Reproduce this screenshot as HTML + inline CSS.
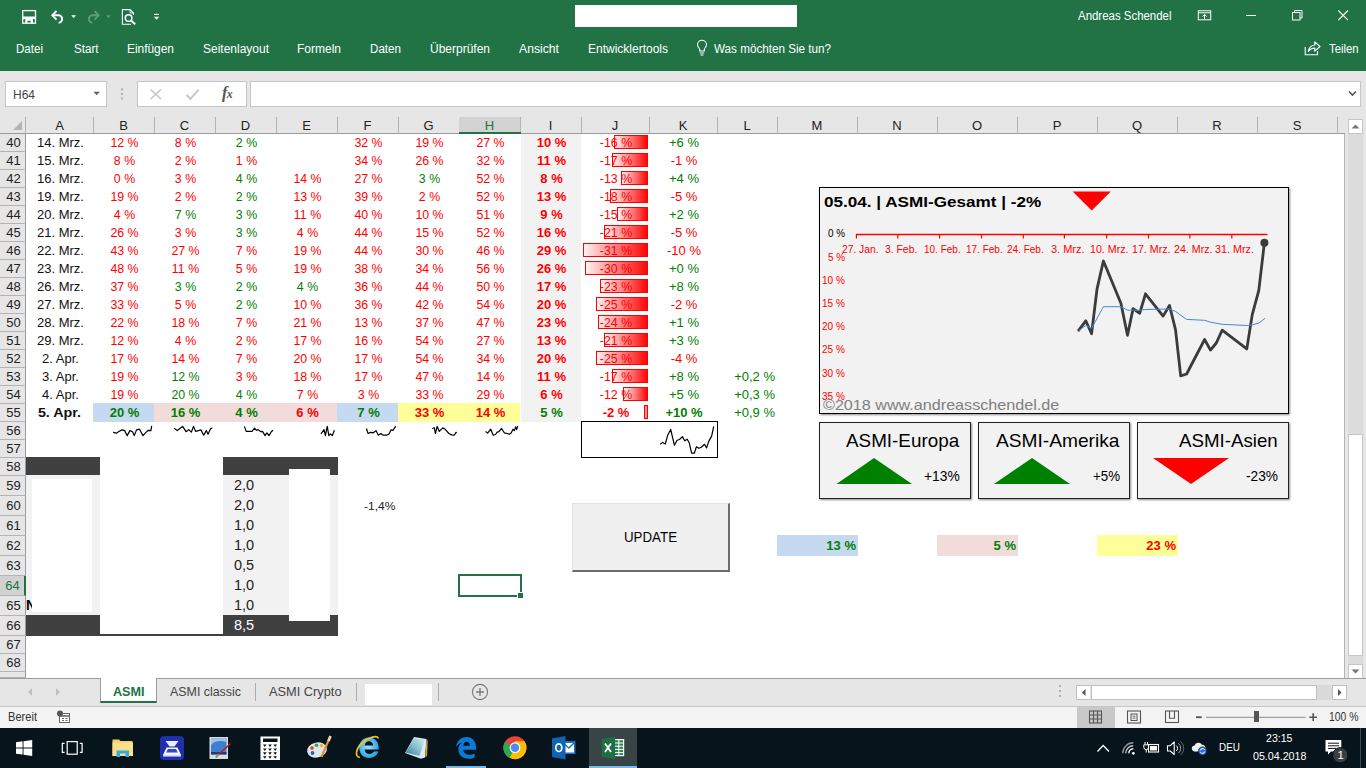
<!DOCTYPE html><html lang="de"><head><meta charset="utf-8"><title>Excel</title><style>
html,body{margin:0;padding:0;}
body{width:1366px;height:768px;overflow:hidden;position:relative;background:#fff;font-family:"Liberation Sans",sans-serif;font-size:12px;color:#000;}
div,span{position:absolute;box-sizing:border-box;white-space:nowrap;}
svg{position:absolute;overflow:visible;}
.t{line-height:1;transform-origin:0 50%;}
.w{color:#fff;}
.ch{top:117px;height:16px;font-size:13px;line-height:17px;text-align:center;color:#222;border-right:1px solid #b4b4b4;}
.rh{left:0;width:26px;text-indent:1px;font-size:13px;text-align:center;color:#222;border-bottom:1px solid #b4b4b4;}
.c{height:18px;line-height:17px;font-size:13px;text-align:center;color:#111;}
.r{color:#ff0000;}
.g{color:#008000;}
.b{font-weight:bold;}
.n{left:223px;width:42px;text-align:center;font-size:14.5px;color:#222;line-height:20px;height:20px;}
</style></head><body>
<div style="left:0;top:0;width:1366px;height:71px;background:#217346"></div>
<div style="left:575px;top:5px;width:222px;height:22px;background:#fff"></div>
<div class="t" style="left:1078.0px;top:10px;font-size:12.5px;color:#fff;transform:scaleX(0.915);">Andreas Schendel</div>
<div class="t" style="left:16.0px;top:43px;font-size:12.5px;color:#fff;transform:scaleX(0.925);">Datei</div>
<div class="t" style="left:73.5px;top:43px;font-size:12.5px;color:#fff;transform:scaleX(0.928);">Start</div>
<div class="t" style="left:127.0px;top:43px;font-size:12.5px;color:#fff;transform:scaleX(0.952);">Einfügen</div>
<div class="t" style="left:202.5px;top:43px;font-size:12.5px;color:#fff;transform:scaleX(0.959);">Seitenlayout</div>
<div class="t" style="left:297.0px;top:43px;font-size:12.5px;color:#fff;transform:scaleX(0.960);">Formeln</div>
<div class="t" style="left:370.0px;top:43px;font-size:12.5px;color:#fff;transform:scaleX(0.929);">Daten</div>
<div class="t" style="left:430.0px;top:43px;font-size:12.5px;color:#fff;transform:scaleX(0.959);">Überprüfen</div>
<div class="t" style="left:519.0px;top:43px;font-size:12.5px;color:#fff;transform:scaleX(0.976);">Ansicht</div>
<div class="t" style="left:588.0px;top:43px;font-size:12.5px;color:#fff;transform:scaleX(0.960);">Entwicklertools</div>
<div class="t" style="left:714.0px;top:43px;font-size:12.5px;color:#fff;transform:scaleX(0.934);">Was möchten Sie tun?</div>
<div class="t" style="left:1329.0px;top:43px;font-size:12.5px;color:#fff;transform:scaleX(0.906);">Teilen</div>
<svg style="left:0;top:0" width="1366" height="71"><rect x="22.7" y="10.6" width="12.8" height="12.6" fill="none" stroke="#fff" stroke-width="1.3"/><rect x="25" y="10.6" width="8.6" height="4.8" fill="none" stroke="#fff" stroke-width="0"/><rect x="23" y="16.5" width="12.4" height="2.6" fill="#fff"/><path d="M25.2 19V23.2H27.5V20.8H30.6V23.2H33V19Z" fill="#fff"/><path d="M56.5 11L52.3 15.3L56.5 19.6" fill="none" stroke="#fff" stroke-width="1.9"/><path d="M52.8 15.3H59.6A3.9 3.9 0 0 1 59.6 22.6H58.6" fill="none" stroke="#fff" stroke-width="1.9"/><path d="M71.2 15.2H76L73.6 18Z" fill="#fff"/><path d="M94.5 11L98.7 15.3L94.5 19.6" fill="none" stroke="#5c9b79" stroke-width="1.9"/><path d="M98.2 15.3H91.4A3.9 3.9 0 0 0 91.4 22.6H92.4" fill="none" stroke="#5c9b79" stroke-width="1.9"/><path d="M106 15.2H110.8L108.4 18Z" fill="#5c9b79"/><path d="M131 24.3H122.4V9.6H130L133.4 13V15" fill="none" stroke="#fff" stroke-width="1.1"/><path d="M130 9.6V13H133.4" fill="none" stroke="#fff" stroke-width="0.8"/><circle cx="128.6" cy="18" r="3.3" fill="none" stroke="#fff" stroke-width="1.5"/><path d="M131 20.6L135.2 24.3" stroke="#fff" stroke-width="2" fill="none"/><path d="M154 14.4H159" stroke="#fff" stroke-width="1.1"/><path d="M153.8 16.8H159.2L156.5 19.8Z" fill="#fff"/><rect x="1198.3" y="10.8" width="12.4" height="9" fill="none" stroke="#fff" stroke-width="1"/><path d="M1198 12.8H1211" stroke="#fff" stroke-width="1"/><path d="M1204.5 19V14.6M1202.3 16.6L1204.5 14.4L1206.7 16.6" fill="none" stroke="#fff" stroke-width="1"/><path d="M1246 15.5H1256" stroke="#fff" stroke-width="1"/><rect x="1292.5" y="12.5" width="7.5" height="7.5" fill="none" stroke="#fff" stroke-width="1"/><path d="M1294.5 12.5V10.5H1302V18H1300" fill="none" stroke="#fff" stroke-width="1"/><path d="M1338.3 10.5L1348 20.2M1348 10.5L1338.3 20.2" stroke="#fff" stroke-width="1.1"/><path d="M699.7 51V49.6C699.7 48 697.5 47.3 697.5 44.8A4.5 4.5 0 0 1 706.5 44.8C706.5 47.3 704.3 48 704.3 49.6V51Z" fill="none" stroke="#fff" stroke-width="1.1"/><path d="M699.8 53H704.2M700.5 55H703.5" stroke="#fff" stroke-width="1.1"/><path d="M1305.2 47V54.7H1317.5V51" fill="none" stroke="#fff" stroke-width="1.1"/><path d="M1308.3 51.5C1309 47.5 1311.7 45.3 1314.8 45V41.8L1320 46.5L1314.8 51.2V48.1C1312.2 48.1 1310 49 1308.3 51.5Z" fill="none" stroke="#fff" stroke-width="1.1" stroke-linejoin="round"/></svg>
<div style="left:0;top:71px;width:1366px;height:46px;background:#e6e6e6"></div>
<div style="left:5px;top:81px;width:102px;height:26px;background:#fff;border:1px solid #c6c6c6"></div>
<div class="t" style="left:12.7px;top:89px;font-size:12.5px;color:#444;transform:scaleX(0.959);">H64</div>
<div style="left:137px;top:81px;width:110px;height:26px;background:#fff;border:1px solid #c6c6c6"></div>
<div style="left:250px;top:81px;width:1111px;height:26px;background:#fff;border:1px solid #c6c6c6"></div>
<svg style="left:0;top:71px" width="1366" height="46" viewBox="0 71 1366 46"><path d="M93.3 91.8H100L96.65 95.2Z" fill="#666"/><rect x="121" y="88.4" width="2" height="2" fill="#b0b0b0"/><rect x="121" y="93.0" width="2" height="2" fill="#b0b0b0"/><rect x="121" y="97.5" width="2" height="2" fill="#b0b0b0"/><path d="M150.6 89.4L161 99M161 89.4L150.6 99" stroke="#c3c3c3" stroke-width="1.4"/><path d="M186.5 95L190.5 98.8L198.6 89.6" fill="none" stroke="#c6c6c6" stroke-width="1.9"/><path d="M1349 91.5L1352.5 95L1356 91.5" fill="none" stroke="#555" stroke-width="1.6"/></svg><div class="t" style="left:222px;top:85px;font-family:'Liberation Serif',serif;font-style:italic;font-size:16px;color:#555;font-weight:bold;letter-spacing:-0.5px">f<span style="position:static;font-size:12px">x</span></div>
<div style="left:0;top:117px;width:1366px;height:17px;background:#e6e6e6"></div>
<div class="ch" style="left:26px;width:68px;">A</div>
<div class="ch" style="left:93px;width:62px;">B</div>
<div class="ch" style="left:154px;width:62px;">C</div>
<div class="ch" style="left:215px;width:62px;">D</div>
<div class="ch" style="left:276px;width:62px;">E</div>
<div class="ch" style="left:337px;width:62px;">F</div>
<div class="ch" style="left:398px;width:62px;">G</div>
<div class="ch" style="left:459px;width:62px;background:#d2d2d2;color:#217346;">H</div>
<div class="ch" style="left:520px;width:62px;">I</div>
<div class="ch" style="left:581px;width:69px;">J</div>
<div class="ch" style="left:649px;width:69px;">K</div>
<div class="ch" style="left:717px;width:61px;">L</div>
<div class="ch" style="left:777px;width:81px;">M</div>
<div class="ch" style="left:857px;width:81px;">N</div>
<div class="ch" style="left:937px;width:81px;">O</div>
<div class="ch" style="left:1017px;width:81px;">P</div>
<div class="ch" style="left:1097px;width:81px;">Q</div>
<div class="ch" style="left:1177px;width:81px;">R</div>
<div class="ch" style="left:1257px;width:81px;">S</div>
<div style="left:25px;top:117px;width:1px;height:16px;background:#b4b4b4"></div>
<div style="left:0;top:133px;width:1345px;height:1px;background:#9b9b9b"></div>
<div style="left:459px;top:132px;width:62px;height:2px;background:#217346"></div>
<svg style="left:13px;top:121px" width="9" height="9"><path d="M9 0V9H0Z" fill="#b4b4b4"/></svg>
<div style="left:0;top:134px;width:26px;height:544px;background:#e6e6e6;border-right:1px solid #9b9b9b"></div>
<div class="rh" style="top:134px;height:18px;line-height:17px;">40</div>
<div class="rh" style="top:152px;height:18px;line-height:17px;">41</div>
<div class="rh" style="top:170px;height:18px;line-height:17px;">42</div>
<div class="rh" style="top:188px;height:18px;line-height:17px;">43</div>
<div class="rh" style="top:206px;height:18px;line-height:17px;">44</div>
<div class="rh" style="top:224px;height:18px;line-height:17px;">45</div>
<div class="rh" style="top:242px;height:18px;line-height:17px;">46</div>
<div class="rh" style="top:260px;height:18px;line-height:17px;">47</div>
<div class="rh" style="top:278px;height:18px;line-height:17px;">48</div>
<div class="rh" style="top:296px;height:18px;line-height:17px;">49</div>
<div class="rh" style="top:314px;height:18px;line-height:17px;">50</div>
<div class="rh" style="top:332px;height:18px;line-height:17px;">51</div>
<div class="rh" style="top:350px;height:18px;line-height:17px;">52</div>
<div class="rh" style="top:368px;height:18px;line-height:17px;">53</div>
<div class="rh" style="top:386px;height:18px;line-height:17px;">54</div>
<div class="rh" style="top:404px;height:18px;line-height:17px;">55</div>
<div class="rh" style="top:422px;height:18px;line-height:17px;">56</div>
<div class="rh" style="top:440px;height:18px;line-height:17px;">57</div>
<div class="rh" style="top:458px;height:18px;line-height:17px;">58</div>
<div class="rh" style="top:476px;height:20px;line-height:19px;">59</div>
<div class="rh" style="top:496px;height:20px;line-height:19px;">60</div>
<div class="rh" style="top:516px;height:20px;line-height:19px;">61</div>
<div class="rh" style="top:536px;height:20px;line-height:19px;">62</div>
<div class="rh" style="top:556px;height:20px;line-height:19px;">63</div>
<div class="rh" style="top:576px;height:20px;line-height:19px;background:#d2d2d2;color:#217346;border-right:2px solid #217346;">64</div>
<div class="rh" style="top:596px;height:20px;line-height:19px;">65</div>
<div class="rh" style="top:616px;height:20px;line-height:19px;">66</div>
<div class="rh" style="top:636px;height:18px;line-height:17px;">67</div>
<div class="rh" style="top:654px;height:18px;line-height:17px;">68</div>
<div class="rh" style="top:672px;height:6px;line-height:17px;"></div>
<div style="left:521px;top:134px;width:60px;height:288px;background:#f2f2f2"></div>
<div style="left:93px;top:403px;width:61px;height:19px;background:#c5d9f1"></div>
<div style="left:154px;top:403px;width:61px;height:19px;background:#f2dcdb"></div>
<div style="left:215px;top:403px;width:61px;height:19px;background:#f2dcdb"></div>
<div style="left:276px;top:403px;width:61px;height:19px;background:#f2dcdb"></div>
<div style="left:337px;top:403px;width:61px;height:19px;background:#c5d9f1"></div>
<div style="left:398px;top:403px;width:61px;height:19px;background:#ffff99"></div>
<div style="left:459px;top:403px;width:61px;height:19px;background:#ffff99"></div>
<div class="c" style="left:27px;top:134px;width:67px">14. Mrz.</div>
<div class="c r" style="left:94px;top:134px;width:61px;transform:scaleX(.95)">12 %</div>
<div class="c r" style="left:155px;top:134px;width:61px;transform:scaleX(.95)">8 %</div>
<div class="c g" style="left:216px;top:134px;width:61px;transform:scaleX(.95)">2 %</div>
<div class="c r" style="left:338px;top:134px;width:61px;transform:scaleX(.95)">32 %</div>
<div class="c r" style="left:399px;top:134px;width:61px;transform:scaleX(.95)">19 %</div>
<div class="c r" style="left:460px;top:134px;width:61px;transform:scaleX(.95)">27 %</div>
<div class="c b r" style="left:521px;top:134px;width:61px">10 %</div>
<div style="left:614px;top:135px;width:34px;height:14px;border:1px solid #ff0000;background:linear-gradient(90deg,#fff2f2,#ff0505)"></div>
<div class="c r" style="left:582px;top:134px;width:68px;transform:scaleX(.95)">-16 %</div>
<div class="c g" style="left:650px;top:134px;width:68px">+6 %</div>
<div class="c" style="left:27px;top:152px;width:67px">15. Mrz.</div>
<div class="c r" style="left:94px;top:152px;width:61px;transform:scaleX(.95)">8 %</div>
<div class="c r" style="left:155px;top:152px;width:61px;transform:scaleX(.95)">2 %</div>
<div class="c r" style="left:216px;top:152px;width:61px;transform:scaleX(.95)">1 %</div>
<div class="c r" style="left:338px;top:152px;width:61px;transform:scaleX(.95)">34 %</div>
<div class="c r" style="left:399px;top:152px;width:61px;transform:scaleX(.95)">26 %</div>
<div class="c r" style="left:460px;top:152px;width:61px;transform:scaleX(.95)">32 %</div>
<div class="c b r" style="left:521px;top:152px;width:61px">11 %</div>
<div style="left:612px;top:153px;width:36px;height:14px;border:1px solid #ff0000;background:linear-gradient(90deg,#fff2f2,#ff0505)"></div>
<div class="c r" style="left:582px;top:152px;width:68px;transform:scaleX(.95)">-17 %</div>
<div class="c r" style="left:650px;top:152px;width:68px">-1 %</div>
<div class="c" style="left:27px;top:170px;width:67px">16. Mrz.</div>
<div class="c r" style="left:94px;top:170px;width:61px;transform:scaleX(.95)">0 %</div>
<div class="c r" style="left:155px;top:170px;width:61px;transform:scaleX(.95)">3 %</div>
<div class="c g" style="left:216px;top:170px;width:61px;transform:scaleX(.95)">4 %</div>
<div class="c r" style="left:277px;top:170px;width:61px;transform:scaleX(.95)">14 %</div>
<div class="c r" style="left:338px;top:170px;width:61px;transform:scaleX(.95)">27 %</div>
<div class="c g" style="left:399px;top:170px;width:61px;transform:scaleX(.95)">3 %</div>
<div class="c r" style="left:460px;top:170px;width:61px;transform:scaleX(.95)">52 %</div>
<div class="c b r" style="left:521px;top:170px;width:61px">8 %</div>
<div style="left:621px;top:171px;width:27px;height:14px;border:1px solid #ff0000;background:linear-gradient(90deg,#fff2f2,#ff0505)"></div>
<div class="c r" style="left:582px;top:170px;width:68px;transform:scaleX(.95)">-13 %</div>
<div class="c g" style="left:650px;top:170px;width:68px">+4 %</div>
<div class="c" style="left:27px;top:188px;width:67px">19. Mrz.</div>
<div class="c r" style="left:94px;top:188px;width:61px;transform:scaleX(.95)">19 %</div>
<div class="c r" style="left:155px;top:188px;width:61px;transform:scaleX(.95)">2 %</div>
<div class="c g" style="left:216px;top:188px;width:61px;transform:scaleX(.95)">2 %</div>
<div class="c r" style="left:277px;top:188px;width:61px;transform:scaleX(.95)">13 %</div>
<div class="c r" style="left:338px;top:188px;width:61px;transform:scaleX(.95)">39 %</div>
<div class="c r" style="left:399px;top:188px;width:61px;transform:scaleX(.95)">2 %</div>
<div class="c r" style="left:460px;top:188px;width:61px;transform:scaleX(.95)">52 %</div>
<div class="c b r" style="left:521px;top:188px;width:61px">13 %</div>
<div style="left:610px;top:189px;width:38px;height:14px;border:1px solid #ff0000;background:linear-gradient(90deg,#fff2f2,#ff0505)"></div>
<div class="c r" style="left:582px;top:188px;width:68px;transform:scaleX(.95)">-18 %</div>
<div class="c r" style="left:650px;top:188px;width:68px">-5 %</div>
<div class="c" style="left:27px;top:206px;width:67px">20. Mrz.</div>
<div class="c r" style="left:94px;top:206px;width:61px;transform:scaleX(.95)">4 %</div>
<div class="c g" style="left:155px;top:206px;width:61px;transform:scaleX(.95)">7 %</div>
<div class="c g" style="left:216px;top:206px;width:61px;transform:scaleX(.95)">3 %</div>
<div class="c r" style="left:277px;top:206px;width:61px;transform:scaleX(.95)">11 %</div>
<div class="c r" style="left:338px;top:206px;width:61px;transform:scaleX(.95)">40 %</div>
<div class="c r" style="left:399px;top:206px;width:61px;transform:scaleX(.95)">10 %</div>
<div class="c r" style="left:460px;top:206px;width:61px;transform:scaleX(.95)">51 %</div>
<div class="c b r" style="left:521px;top:206px;width:61px">9 %</div>
<div style="left:617px;top:207px;width:31px;height:14px;border:1px solid #ff0000;background:linear-gradient(90deg,#fff2f2,#ff0505)"></div>
<div class="c r" style="left:582px;top:206px;width:68px;transform:scaleX(.95)">-15 %</div>
<div class="c g" style="left:650px;top:206px;width:68px">+2 %</div>
<div class="c" style="left:27px;top:224px;width:67px">21. Mrz.</div>
<div class="c r" style="left:94px;top:224px;width:61px;transform:scaleX(.95)">26 %</div>
<div class="c r" style="left:155px;top:224px;width:61px;transform:scaleX(.95)">3 %</div>
<div class="c g" style="left:216px;top:224px;width:61px;transform:scaleX(.95)">3 %</div>
<div class="c r" style="left:277px;top:224px;width:61px;transform:scaleX(.95)">4 %</div>
<div class="c r" style="left:338px;top:224px;width:61px;transform:scaleX(.95)">44 %</div>
<div class="c r" style="left:399px;top:224px;width:61px;transform:scaleX(.95)">15 %</div>
<div class="c r" style="left:460px;top:224px;width:61px;transform:scaleX(.95)">52 %</div>
<div class="c b r" style="left:521px;top:224px;width:61px">16 %</div>
<div style="left:604px;top:225px;width:44px;height:14px;border:1px solid #ff0000;background:linear-gradient(90deg,#fff2f2,#ff0505)"></div>
<div class="c r" style="left:582px;top:224px;width:68px;transform:scaleX(.95)">-21 %</div>
<div class="c r" style="left:650px;top:224px;width:68px">-5 %</div>
<div class="c" style="left:27px;top:242px;width:67px">22. Mrz.</div>
<div class="c r" style="left:94px;top:242px;width:61px;transform:scaleX(.95)">43 %</div>
<div class="c r" style="left:155px;top:242px;width:61px;transform:scaleX(.95)">27 %</div>
<div class="c r" style="left:216px;top:242px;width:61px;transform:scaleX(.95)">7 %</div>
<div class="c r" style="left:277px;top:242px;width:61px;transform:scaleX(.95)">19 %</div>
<div class="c r" style="left:338px;top:242px;width:61px;transform:scaleX(.95)">44 %</div>
<div class="c r" style="left:399px;top:242px;width:61px;transform:scaleX(.95)">30 %</div>
<div class="c r" style="left:460px;top:242px;width:61px;transform:scaleX(.95)">46 %</div>
<div class="c b r" style="left:521px;top:242px;width:61px">29 %</div>
<div style="left:583px;top:243px;width:65px;height:14px;border:1px solid #ff0000;background:linear-gradient(90deg,#fff2f2,#ff0505)"></div>
<div class="c r" style="left:582px;top:242px;width:68px;transform:scaleX(.95)">-31 %</div>
<div class="c r" style="left:650px;top:242px;width:68px">-10 %</div>
<div class="c" style="left:27px;top:260px;width:67px">23. Mrz.</div>
<div class="c r" style="left:94px;top:260px;width:61px;transform:scaleX(.95)">48 %</div>
<div class="c r" style="left:155px;top:260px;width:61px;transform:scaleX(.95)">11 %</div>
<div class="c r" style="left:216px;top:260px;width:61px;transform:scaleX(.95)">5 %</div>
<div class="c r" style="left:277px;top:260px;width:61px;transform:scaleX(.95)">19 %</div>
<div class="c r" style="left:338px;top:260px;width:61px;transform:scaleX(.95)">38 %</div>
<div class="c r" style="left:399px;top:260px;width:61px;transform:scaleX(.95)">34 %</div>
<div class="c r" style="left:460px;top:260px;width:61px;transform:scaleX(.95)">56 %</div>
<div class="c b r" style="left:521px;top:260px;width:61px">26 %</div>
<div style="left:585px;top:261px;width:63px;height:14px;border:1px solid #ff0000;background:linear-gradient(90deg,#fff2f2,#ff0505)"></div>
<div class="c r" style="left:582px;top:260px;width:68px;transform:scaleX(.95)">-30 %</div>
<div class="c g" style="left:650px;top:260px;width:68px">+0 %</div>
<div class="c" style="left:27px;top:278px;width:67px">26. Mrz.</div>
<div class="c r" style="left:94px;top:278px;width:61px;transform:scaleX(.95)">37 %</div>
<div class="c g" style="left:155px;top:278px;width:61px;transform:scaleX(.95)">3 %</div>
<div class="c g" style="left:216px;top:278px;width:61px;transform:scaleX(.95)">2 %</div>
<div class="c g" style="left:277px;top:278px;width:61px;transform:scaleX(.95)">4 %</div>
<div class="c r" style="left:338px;top:278px;width:61px;transform:scaleX(.95)">36 %</div>
<div class="c r" style="left:399px;top:278px;width:61px;transform:scaleX(.95)">44 %</div>
<div class="c r" style="left:460px;top:278px;width:61px;transform:scaleX(.95)">50 %</div>
<div class="c b r" style="left:521px;top:278px;width:61px">17 %</div>
<div style="left:600px;top:279px;width:48px;height:14px;border:1px solid #ff0000;background:linear-gradient(90deg,#fff2f2,#ff0505)"></div>
<div class="c r" style="left:582px;top:278px;width:68px;transform:scaleX(.95)">-23 %</div>
<div class="c g" style="left:650px;top:278px;width:68px">+8 %</div>
<div class="c" style="left:27px;top:296px;width:67px">27. Mrz.</div>
<div class="c r" style="left:94px;top:296px;width:61px;transform:scaleX(.95)">33 %</div>
<div class="c r" style="left:155px;top:296px;width:61px;transform:scaleX(.95)">5 %</div>
<div class="c g" style="left:216px;top:296px;width:61px;transform:scaleX(.95)">2 %</div>
<div class="c r" style="left:277px;top:296px;width:61px;transform:scaleX(.95)">10 %</div>
<div class="c r" style="left:338px;top:296px;width:61px;transform:scaleX(.95)">36 %</div>
<div class="c r" style="left:399px;top:296px;width:61px;transform:scaleX(.95)">42 %</div>
<div class="c r" style="left:460px;top:296px;width:61px;transform:scaleX(.95)">54 %</div>
<div class="c b r" style="left:521px;top:296px;width:61px">20 %</div>
<div style="left:596px;top:297px;width:52px;height:14px;border:1px solid #ff0000;background:linear-gradient(90deg,#fff2f2,#ff0505)"></div>
<div class="c r" style="left:582px;top:296px;width:68px;transform:scaleX(.95)">-25 %</div>
<div class="c r" style="left:650px;top:296px;width:68px">-2 %</div>
<div class="c" style="left:27px;top:314px;width:67px">28. Mrz.</div>
<div class="c r" style="left:94px;top:314px;width:61px;transform:scaleX(.95)">22 %</div>
<div class="c r" style="left:155px;top:314px;width:61px;transform:scaleX(.95)">18 %</div>
<div class="c r" style="left:216px;top:314px;width:61px;transform:scaleX(.95)">7 %</div>
<div class="c r" style="left:277px;top:314px;width:61px;transform:scaleX(.95)">21 %</div>
<div class="c r" style="left:338px;top:314px;width:61px;transform:scaleX(.95)">13 %</div>
<div class="c r" style="left:399px;top:314px;width:61px;transform:scaleX(.95)">37 %</div>
<div class="c r" style="left:460px;top:314px;width:61px;transform:scaleX(.95)">47 %</div>
<div class="c b r" style="left:521px;top:314px;width:61px">23 %</div>
<div style="left:598px;top:315px;width:50px;height:14px;border:1px solid #ff0000;background:linear-gradient(90deg,#fff2f2,#ff0505)"></div>
<div class="c r" style="left:582px;top:314px;width:68px;transform:scaleX(.95)">-24 %</div>
<div class="c g" style="left:650px;top:314px;width:68px">+1 %</div>
<div class="c" style="left:27px;top:332px;width:67px">29. Mrz.</div>
<div class="c r" style="left:94px;top:332px;width:61px;transform:scaleX(.95)">12 %</div>
<div class="c r" style="left:155px;top:332px;width:61px;transform:scaleX(.95)">4 %</div>
<div class="c r" style="left:216px;top:332px;width:61px;transform:scaleX(.95)">2 %</div>
<div class="c r" style="left:277px;top:332px;width:61px;transform:scaleX(.95)">17 %</div>
<div class="c r" style="left:338px;top:332px;width:61px;transform:scaleX(.95)">16 %</div>
<div class="c r" style="left:399px;top:332px;width:61px;transform:scaleX(.95)">54 %</div>
<div class="c r" style="left:460px;top:332px;width:61px;transform:scaleX(.95)">27 %</div>
<div class="c b r" style="left:521px;top:332px;width:61px">13 %</div>
<div style="left:604px;top:333px;width:44px;height:14px;border:1px solid #ff0000;background:linear-gradient(90deg,#fff2f2,#ff0505)"></div>
<div class="c r" style="left:582px;top:332px;width:68px;transform:scaleX(.95)">-21 %</div>
<div class="c g" style="left:650px;top:332px;width:68px">+3 %</div>
<div class="c" style="left:27px;top:350px;width:67px">2. Apr.</div>
<div class="c r" style="left:94px;top:350px;width:61px;transform:scaleX(.95)">17 %</div>
<div class="c r" style="left:155px;top:350px;width:61px;transform:scaleX(.95)">14 %</div>
<div class="c r" style="left:216px;top:350px;width:61px;transform:scaleX(.95)">7 %</div>
<div class="c r" style="left:277px;top:350px;width:61px;transform:scaleX(.95)">20 %</div>
<div class="c r" style="left:338px;top:350px;width:61px;transform:scaleX(.95)">17 %</div>
<div class="c r" style="left:399px;top:350px;width:61px;transform:scaleX(.95)">54 %</div>
<div class="c r" style="left:460px;top:350px;width:61px;transform:scaleX(.95)">34 %</div>
<div class="c b r" style="left:521px;top:350px;width:61px">20 %</div>
<div style="left:596px;top:351px;width:52px;height:14px;border:1px solid #ff0000;background:linear-gradient(90deg,#fff2f2,#ff0505)"></div>
<div class="c r" style="left:582px;top:350px;width:68px;transform:scaleX(.95)">-25 %</div>
<div class="c r" style="left:650px;top:350px;width:68px">-4 %</div>
<div class="c" style="left:27px;top:368px;width:67px">3. Apr.</div>
<div class="c r" style="left:94px;top:368px;width:61px;transform:scaleX(.95)">19 %</div>
<div class="c g" style="left:155px;top:368px;width:61px;transform:scaleX(.95)">12 %</div>
<div class="c r" style="left:216px;top:368px;width:61px;transform:scaleX(.95)">3 %</div>
<div class="c r" style="left:277px;top:368px;width:61px;transform:scaleX(.95)">18 %</div>
<div class="c r" style="left:338px;top:368px;width:61px;transform:scaleX(.95)">17 %</div>
<div class="c r" style="left:399px;top:368px;width:61px;transform:scaleX(.95)">47 %</div>
<div class="c r" style="left:460px;top:368px;width:61px;transform:scaleX(.95)">14 %</div>
<div class="c b r" style="left:521px;top:368px;width:61px">11 %</div>
<div style="left:612px;top:369px;width:36px;height:14px;border:1px solid #ff0000;background:linear-gradient(90deg,#fff2f2,#ff0505)"></div>
<div class="c r" style="left:582px;top:368px;width:68px;transform:scaleX(.95)">-17 %</div>
<div class="c g" style="left:650px;top:368px;width:68px">+8 %</div>
<div class="c g" style="left:717px;top:368px;width:58px;text-align:right">+0,2 %</div>
<div class="c" style="left:27px;top:386px;width:67px">4. Apr.</div>
<div class="c r" style="left:94px;top:386px;width:61px;transform:scaleX(.95)">19 %</div>
<div class="c g" style="left:155px;top:386px;width:61px;transform:scaleX(.95)">20 %</div>
<div class="c g" style="left:216px;top:386px;width:61px;transform:scaleX(.95)">4 %</div>
<div class="c r" style="left:277px;top:386px;width:61px;transform:scaleX(.95)">7 %</div>
<div class="c r" style="left:338px;top:386px;width:61px;transform:scaleX(.95)">3 %</div>
<div class="c r" style="left:399px;top:386px;width:61px;transform:scaleX(.95)">33 %</div>
<div class="c r" style="left:460px;top:386px;width:61px;transform:scaleX(.95)">29 %</div>
<div class="c b r" style="left:521px;top:386px;width:61px">6 %</div>
<div style="left:623px;top:387px;width:25px;height:14px;border:1px solid #ff0000;background:linear-gradient(90deg,#fff2f2,#ff0505)"></div>
<div class="c r" style="left:582px;top:386px;width:68px;transform:scaleX(.95)">-12 %</div>
<div class="c g" style="left:650px;top:386px;width:68px">+5 %</div>
<div class="c g" style="left:717px;top:386px;width:58px;text-align:right">+0,3 %</div>
<div class="c b" style="left:26px;top:404px;width:67px;transform:scaleX(1.1)">5. Apr.</div>
<div class="c g b" style="left:94px;top:404px;width:61px">20 %</div>
<div class="c g b" style="left:155px;top:404px;width:61px">16 %</div>
<div class="c g b" style="left:216px;top:404px;width:61px">4 %</div>
<div class="c r b" style="left:277px;top:404px;width:61px">6 %</div>
<div class="c g b" style="left:338px;top:404px;width:61px">7 %</div>
<div class="c r b" style="left:399px;top:404px;width:61px">33 %</div>
<div class="c r b" style="left:460px;top:404px;width:61px">14 %</div>
<div class="c b g" style="left:521px;top:404px;width:61px">5 %</div>
<div style="left:644px;top:405px;width:4px;height:14px;border:1px solid #ff0000;background:#ff9090"></div>
<div class="c r b" style="left:582px;top:404px;width:68px">-2 %</div>
<div class="c g b" style="left:650px;top:404px;width:68px">+10 %</div>
<div class="c g" style="left:717px;top:404px;width:58px;text-align:right">+0,9 %</div>
<div style="left:581px;top:421px;width:137px;height:37px;border:1px solid #000;background:#fff"></div>
<svg style="left:0;top:0" width="1366" height="768"><polyline points="113.2,432.4 116.7,433.1 118.4,431.7 122.0,429.9 124.6,430.6 127.2,435.6 129.9,430.6 132.5,431.7 134.3,435.6 136.5,429.9 139.5,429.2 143.0,435.6 146.0,432.4 148.3,430.3 150.9,430.6 151.7,425.9" fill="none" stroke="#000" stroke-width="1.2" stroke-linejoin="round"/><polyline points="174.1,428.2 177.3,430.6 179.9,428.5 182.6,426.4 186.1,431.7 188.7,429.6 191.4,432.1 193.5,426.4 195.7,431.4 201.0,429.9 203.7,435.2 206.3,430.6 208.0,434.2 210.7,428.5 212.4,428.2" fill="none" stroke="#000" stroke-width="1.2" stroke-linejoin="round"/><polyline points="244.4,426.4 246.2,431.4 252.0,431.4 254.6,428.2 256.4,430.3 258.1,429.6 260.8,431.7 262.5,431.4 265.1,435.6 266.9,432.8 269.0,435.6 271.3,431.7 273.0,430.3" fill="none" stroke="#000" stroke-width="1.2" stroke-linejoin="round"/><polyline points="321.0,433.8 324.0,429.6 325.4,435.6 327.2,426.4 328.9,435.6 330.5,433.8 332.3,435.6 334.4,430.3" fill="none" stroke="#000" stroke-width="1.2" stroke-linejoin="round"/><polyline points="366.4,428.5 368.1,433.5 370.7,432.4 373.4,432.8 376.0,430.6 378.3,435.2 380.8,433.5 383.0,435.2 386.6,435.2 389.2,433.8 390.9,429.9 393.1,430.3 395.7,426.1" fill="none" stroke="#000" stroke-width="1.2" stroke-linejoin="round"/><polyline points="432.2,428.5 434.3,427.8 435.4,433.5 437.2,426.4 439.3,431.4 442.8,427.8 445.4,429.6 448.9,433.5 451.6,434.9 454.2,435.2 456.0,432.4 456.8,432.8" fill="none" stroke="#000" stroke-width="1.2" stroke-linejoin="round"/><polyline points="485.5,431.4 487.6,433.1 490.7,429.2 493.2,435.2 495.5,434.5 497.2,432.1 499.0,431.7 501.6,428.5 504.3,432.8 506.9,433.5 509.5,434.2 511.3,432.8 513.0,429.2 514.3,430.6 515.7,426.8 516.6,429.6 517.8,426.1" fill="none" stroke="#000" stroke-width="1.2" stroke-linejoin="round"/><polyline points="660.2,444.3 662.6,442.4 665.3,444.0 667.9,434.7 670.7,429.5 674.4,445.1 677.1,440.3 679.5,439.5 682.4,436.6 684.7,440.8 687.2,439.2 689.2,442.7 691.6,453.2 694.3,453.2 696.4,446.7 698.8,448.3 701.3,447.2 704.5,444.3 706.6,447.9 708.5,441.9 711.7,435.9 713.7,426.3" fill="none" stroke="#000" stroke-width="1.2" stroke-linejoin="round"/></svg>
<div style="left:26px;top:457px;width:74px;height:18px;background:#404040"></div>
<div style="left:223px;top:457px;width:115px;height:18px;background:#404040"></div>
<div style="left:26px;top:475px;width:74px;height:140px;background:#f2f2f2"></div>
<div style="left:223px;top:475px;width:115px;height:140px;background:#f2f2f2"></div>
<div style="left:26px;top:615px;width:312px;height:21px;background:#404040"></div>
<div class="t b" style="left:26px;top:598px;font-size:14px;color:#000">N</div>
<div style="left:100px;top:457px;width:123px;height:179px;background:#fff;border-bottom:2px solid #404040"></div>
<div style="left:32px;top:479px;width:60px;height:133px;background:#fff"></div>
<div style="left:289px;top:469px;width:41px;height:152px;background:#fff"></div>
<div class="n" style="top:475px">2,0</div>
<div class="n" style="top:495px">2,0</div>
<div class="n" style="top:515px">1,0</div>
<div class="n" style="top:535px">1,0</div>
<div class="n" style="top:555px">0,5</div>
<div class="n" style="top:575px">1,0</div>
<div class="n" style="top:595px">1,0</div>
<div class="n" style="top:615px;color:#fff">8,5</div>
<div class="t" style="left:364.0px;top:501px;font-size:11px;color:#222;transform:scaleX(1.096);">-1,4%</div>
<div style="left:458px;top:574px;width:64px;height:23px;border:2px solid #217346"></div>
<div style="left:517px;top:592px;width:7px;height:7px;background:#217346;border:1px solid #fff"></div>
<div style="left:572px;top:503px;width:158px;height:69px;background:#f0f0f0;border-right:2px solid #6d6d6d;border-bottom:2px solid #6d6d6d;border-left:1px solid #e3e3e3;border-top:1px solid #e3e3e3"></div>
<div class="t" style="left:623.7px;top:530px;font-size:14px;color:#000;transform:scaleX(0.951);">UPDATE</div>
<div style="left:777px;top:535px;width:81px;height:21px;background:#c5d9f1"></div>
<div style="left:937px;top:535px;width:81px;height:21px;background:#f2dcdb"></div>
<div style="left:1097px;top:535px;width:81px;height:21px;background:#ffff99"></div>
<div class="c b g" style="left:777px;top:536px;width:79px;text-align:right;line-height:20px">13 %</div>
<div class="c b g" style="left:937px;top:536px;width:79px;text-align:right;line-height:20px">5 %</div>
<div class="c b r" style="left:1097px;top:536px;width:79px;text-align:right;line-height:20px">23 %</div>
<div style="left:819px;top:187px;width:470px;height:227px;background:#f2f2f2;border:1px solid #000;box-shadow:1px 1px 2px rgba(0,0,0,.45)"></div>
<div style="left:819px;top:422px;width:152px;height:77px;background:#f2f2f2;border:1px solid #222;box-shadow:1px 1px 2px rgba(0,0,0,.45)"></div>
<div style="left:978px;top:422px;width:152px;height:77px;background:#f2f2f2;border:1px solid #222;box-shadow:1px 1px 2px rgba(0,0,0,.45)"></div>
<div style="left:1137px;top:422px;width:152px;height:77px;background:#f2f2f2;border:1px solid #222;box-shadow:1px 1px 2px rgba(0,0,0,.45)"></div>
<div class="t" style="left:823.7px;top:194px;font-size:15.5px;color:#000;transform:scaleX(1.104);font-weight:bold;">05.04. | ASMI-Gesamt | -2%</div>
<svg style="left:0;top:0" width="1366" height="768"><path d="M856 234.5H1267.5" stroke="#ff0000" stroke-width="1.3" fill="none"/><path d="M856.4 234V238.5M897.8 234V238.5M939.6 234V238.5M981.5 234V238.5M1023.3 234V238.5M1064.4 234V238.5M1106.6 234V238.5M1148.5 234V238.5M1189.9 234V238.5M1231.8 234V238.5" stroke="#ff0000" stroke-width="1.2" fill="none"/><path d="M1072.6 191.5H1110.8L1091.7 210.6Z" fill="#ff0000"/><polyline points="1078.8,330.2 1085.8,320.8 1091.6,333.7 1097.0,289.1 1103.4,261.0 1120.9,303.2 1127.5,335.3 1133.1,308.6 1139.7,313.3 1145.5,293.8 1163.1,316.1 1169.5,305.5 1175.5,329.7 1180.7,375.9 1186.6,374.0 1204.6,339.5 1210.5,350.1 1216.3,343.0 1222.2,330.2 1246.8,348.9 1252.2,314.9 1258.8,290.3 1264.4,242.7" fill="none" stroke="#3b3b3b" stroke-width="2.8" stroke-linejoin="round" stroke-linecap="round"/><polyline points="1078.8,330.6 1085.8,325.5 1091.6,328.3 1103.4,306.7 1120.9,306.7 1127.5,310.2 1139.7,310.2 1145.5,309.5 1169.5,309.0 1175.5,311.4 1186.6,319.4 1204.6,320.3 1210.5,322.2 1222.2,324.3 1246.8,325.5 1252.2,324.8 1258.8,323.1 1265.0,318.4" fill="none" stroke="#4a86d8" stroke-width="1" stroke-linejoin="round"/><circle cx="1264.4" cy="242.7" r="4" fill="#3b3b3b"/><path d="M836.5 484H912L874 458Z" fill="#008000"/><path d="M994 484H1070L1032 458Z" fill="#008000"/><path d="M1153 458H1229L1191 484Z" fill="#ff0000"/></svg>
<div class="t" style="left:827.8px;top:228px;font-size:11px;color:#000;transform:scaleX(0.897);">0 %</div>
<div class="t" style="left:827.8px;top:251.5px;font-size:11px;color:#ff0000;transform:scaleX(0.897);">5 %</div>
<div class="t" style="left:822.0px;top:274.7px;font-size:11px;color:#ff0000;transform:scaleX(0.909);">10 %</div>
<div class="t" style="left:822.0px;top:297.9px;font-size:11px;color:#ff0000;transform:scaleX(0.909);">15 %</div>
<div class="t" style="left:822.0px;top:321.1px;font-size:11px;color:#ff0000;transform:scaleX(0.909);">20 %</div>
<div class="t" style="left:822.0px;top:344.4px;font-size:11px;color:#ff0000;transform:scaleX(0.909);">25 %</div>
<div class="t" style="left:822.0px;top:367.5px;font-size:11px;color:#ff0000;transform:scaleX(0.909);">30 %</div>
<div class="t" style="left:822.0px;top:390.8px;font-size:11px;color:#ff0000;transform:scaleX(0.909);">35 %</div>
<div class="t" style="left:841.5px;top:244px;font-size:11px;color:#ff0000;transform:scaleX(0.933);">27. Jan.</div>
<div class="t" style="left:884.7px;top:244px;font-size:11px;color:#ff0000;transform:scaleX(0.943);">3. Feb.</div>
<div class="t" style="left:923.6px;top:244px;font-size:11px;color:#ff0000;transform:scaleX(0.909);">10. Feb.</div>
<div class="t" style="left:965.5px;top:244px;font-size:11px;color:#ff0000;transform:scaleX(0.909);">17. Feb.</div>
<div class="t" style="left:1007.3px;top:244px;font-size:11px;color:#ff0000;transform:scaleX(0.909);">24. Feb.</div>
<div class="t" style="left:1051.0px;top:244px;font-size:11px;color:#ff0000;transform:scaleX(0.997);">3. Mrz.</div>
<div class="t" style="left:1089.5px;top:244px;font-size:11px;color:#ff0000;transform:scaleX(0.969);">10. Mrz.</div>
<div class="t" style="left:1131.5px;top:244px;font-size:11px;color:#ff0000;transform:scaleX(0.969);">17. Mrz.</div>
<div class="t" style="left:1173.5px;top:244px;font-size:11px;color:#ff0000;transform:scaleX(0.969);">24. Mrz.</div>
<div class="t" style="left:1215.0px;top:244px;font-size:11px;color:#ff0000;transform:scaleX(0.982);">31. Mrz.</div>
<div class="t" style="left:822.8px;top:398px;font-size:14.5px;color:#808080;transform:scaleX(1.113);">©2018 www.andreasschendel.de</div>
<div class="t" style="left:846.4px;top:431px;font-size:19px;color:#000;transform:scaleX(0.992);">ASMI-Europa</div>
<div class="t" style="left:995.6px;top:431px;font-size:19px;color:#000;transform:scaleX(1.008);">ASMI-Amerika</div>
<div class="t" style="left:1179.0px;top:431px;font-size:19px;color:#000;transform:scaleX(0.984);">ASMI-Asien</div>
<div class="t" style="left:924.3px;top:469px;font-size:14px;color:#000;transform:scaleX(0.986);">+13%</div>
<div class="t" style="left:1092.5px;top:469px;font-size:14px;color:#000;transform:scaleX(0.950);">+5%</div>
<div class="t" style="left:1246.0px;top:469px;font-size:14px;color:#000;transform:scaleX(0.979);">-23%</div>
<div style="left:1344px;top:134px;width:22px;height:544px;background:#e6e6e6;border-left:1px solid #b4b4b4"></div>
<div style="left:1345px;top:117px;width:21px;height:17px;background:#e6e6e6"></div>
<div style="left:1348px;top:134px;width:15px;height:530px;background:#dcdcdc"></div>
<div style="left:1348px;top:119px;width:15px;height:15px;background:#fff;border:1px solid #c6c6c6"></div>
<div style="left:1348px;top:434px;width:15px;height:222px;background:#fff;border:1px solid #c6c6c6"></div>
<div style="left:1348px;top:664px;width:15px;height:15px;background:#fff;border:1px solid #c6c6c6"></div>
<svg style="left:1348px;top:119px" width="15" height="15"><path d="M3.5 9.5L7.5 5.5L11.5 9.5Z" fill="#777"/></svg>
<svg style="left:1348px;top:664px" width="15" height="15"><path d="M3.5 5.5L7.5 9.5L11.5 5.5Z" fill="#777"/></svg>
<div style="left:0;top:678px;width:1366px;height:29px;background:#e6e6e6;border-top:1px solid #9b9b9b;border-bottom:1px solid #c6c6c6"></div>
<div style="left:100px;top:678px;width:57px;height:25px;background:#fff;border-left:1px solid #9b9b9b;border-right:1px solid #9b9b9b;border-bottom:2px solid #217346"></div>
<div class="t" style="left:112.5px;top:685px;font-size:13px;color:#217346;transform:scaleX(0.969);font-weight:bold;">ASMI</div>
<div class="t" style="left:170.2px;top:685px;font-size:13px;color:#444;transform:scaleX(0.954);">ASMI classic</div>
<div class="t" style="left:269.0px;top:685px;font-size:13px;color:#444;transform:scaleX(0.984);">ASMI Crypto</div>
<div style="left:255px;top:683px;width:1px;height:18px;background:#ababab"></div>
<div style="left:356px;top:683px;width:1px;height:18px;background:#ababab"></div>
<div style="left:438px;top:683px;width:1px;height:18px;background:#ababab"></div>
<div style="left:365px;top:684px;width:67px;height:21px;background:#fff"></div>
<svg style="left:0;top:678px" width="1366" height="29" viewBox="0 678 1366 29"><path d="M32 688L28 692L32 696Z" fill="#c0c0c0"/><path d="M56 688L60 692L56 696Z" fill="#c0c0c0"/><circle cx="480" cy="692" r="7.6" fill="none" stroke="#777" stroke-width="1.1"/><path d="M476 692H484M480 688V696" stroke="#777" stroke-width="1.3"/><rect x="1059" y="685" width="2" height="2" fill="#b0b0b0"/><rect x="1059" y="690" width="2" height="2" fill="#b0b0b0"/><rect x="1059" y="695" width="2" height="2" fill="#b0b0b0"/><rect x="1076.5" y="685.5" width="14.5" height="14" fill="#fff" stroke="#c0c0c0"/><path d="M1085.5 689L1082 692.5L1085.5 696Z" fill="#555"/><rect x="1091" y="685" width="241" height="15" fill="#dadada"/><rect x="1091.5" y="685.5" width="225" height="14" fill="#fff" stroke="#c0c0c0"/><rect x="1332.5" y="685.5" width="14" height="14" fill="#fff" stroke="#c0c0c0"/><path d="M1338 689L1341.5 692.5L1338 696Z" fill="#555"/></svg>
<div style="left:0;top:707px;width:1366px;height:21px;background:#f3f3f3"></div>
<div class="t" style="left:7.7px;top:711px;font-size:12px;color:#333;transform:scaleX(0.925);">Bereit</div>
<div class="t" style="left:1328.5px;top:711px;font-size:12px;color:#333;transform:scaleX(0.867);">100 %</div>
<svg style="left:0;top:707px" width="1366" height="21" viewBox="0 707 1366 21"><rect x="59.5" y="713.5" width="10" height="9" fill="#fff" stroke="#666"/><path d="M59.5 716H69.5" stroke="#666" stroke-width="1.6"/><path d="M62 718.5H64M65.5 718.5H67.5M62 720.5H64M65.5 720.5H67.5" stroke="#666" stroke-width="1"/><circle cx="60" cy="713.5" r="3" fill="#555"/><rect x="1077" y="707" width="38" height="21" fill="#c8c8c8"/><rect x="1089.5" y="711" width="12" height="12" fill="none" stroke="#555" stroke-width="1.1"/><path d="M1093.5 711V723M1097.5 711V723M1089.5 715H1101.5M1089.5 719H1101.5" stroke="#555" stroke-width="1.1"/><rect x="1127.5" y="711" width="13" height="12" fill="none" stroke="#555" stroke-width="1.1"/><rect x="1131" y="714" width="6" height="6.5" fill="none" stroke="#555"/><path d="M1132.5 716.2H1135.5M1132.5 718.2H1135.5" stroke="#555" stroke-width="0.9"/><rect x="1165.5" y="711" width="13" height="11.5" fill="none" stroke="#555" stroke-width="1.1"/><path d="M1169.5 711V718.2H1174.5V711" fill="none" stroke="#555" stroke-width="1.1"/><path d="M1196 717.2H1201.7" stroke="#555" stroke-width="1.8"/><path d="M1206 717.3H1305.5" stroke="#8a8a8a" stroke-width="1"/><rect x="1254" y="711" width="5" height="11" fill="#555"/><path d="M1309.3 717.2H1317M1313.2 713.3V721" stroke="#555" stroke-width="1.6"/></svg>
<div style="left:0;top:728px;width:1366px;height:40px;background:#08141b"></div>
<div class="t" style="left:1266.0px;top:733px;font-size:11.5px;color:#fff;transform:scaleX(0.921);">23:15</div>
<div class="t" style="left:1253.4px;top:751px;font-size:11.5px;color:#fff;transform:scaleX(0.928);">05.04.2018</div>
<div class="t" style="left:1218.6px;top:742px;font-size:11.5px;color:#fff;transform:scaleX(0.861);">DEU</div>
<svg style="left:0;top:728px" width="1366" height="40" viewBox="0 728 1366 40"><rect x="589" y="728" width="48" height="40" fill="#394447"/><rect x="589" y="766" width="48" height="2" fill="#76b9ed"/><rect x="446" y="766" width="40" height="2" fill="#76b9ed"/><path d="M16 742.2L22.6 741.3V747.5H16ZM23.5 741.2L32.2 740V747.5H23.5ZM16 748.4H22.6V754.6L16 753.7ZM23.5 748.4H32.2V756L23.5 754.8Z" fill="#fff"/><rect x="67.2" y="741.6" width="10" height="12.6" fill="none" stroke="#fff" stroke-width="1.2"/><path d="M64.6 743.4H62.3V752.4H64.6M79.8 743.4H82.1V752.4H79.8" fill="none" stroke="#fff" stroke-width="1.2"/><path d="M112.5 739.5H119L120.5 741H132.5V756H112.5Z" fill="#f5d16a"/><rect x="112.5" y="742.5" width="20.5" height="13.5" fill="#fbe08c"/><path d="M116.5 757V750.5H129V757H125.5V753.5H120V757Z" fill="#35a9e6"/><rect x="160" y="736" width="24" height="24" rx="4" fill="#1f2fb0"/><path d="M165.5 741H178.5L174.5 746.5H169.5Z" fill="#e8ecff"/><path d="M166.5 747.5H177.5L181 755H163Z" fill="#f4f6ff"/><path d="M168 749H176L177.8 752.5H166.2Z" fill="#3146c8"/><rect x="163" y="755" width="18" height="1.6" fill="#cfd6ff"/><rect x="209.5" y="737" width="18.5" height="22" fill="#dcdcdc"/><rect x="211" y="738.5" width="15.5" height="16" fill="#3f7fd0"/><path d="M211 745C214 741 220 740 226.5 742V738.5H211Z" fill="#9cc3ee"/><path d="M211 752H226.5V754.5H211Z" fill="#1d3f78"/><path d="M230.5 743.5L218 755" stroke="#c01828" stroke-width="1.6"/><path d="M218.5 754L216 757.5" stroke="#888" stroke-width="2"/><rect x="260.5" y="736.5" width="19.5" height="23.5" fill="#fff"/><rect x="263" y="738.5" width="14.5" height="3.5" fill="#08141b"/><path d="M263.0 744.5H266.6L264.8 747.1Z" fill="#08141b"/><path d="M268.2 744.5H271.8L270.0 747.1Z" fill="#08141b"/><path d="M273.4 744.5H277.0L275.2 747.1Z" fill="#08141b"/><path d="M263.0 748.4H266.6L264.8 751.0Z" fill="#08141b"/><path d="M268.2 748.4H271.8L270.0 751.0Z" fill="#08141b"/><path d="M273.4 748.4H277.0L275.2 751.0Z" fill="#08141b"/><path d="M263.0 752.3H266.6L264.8 754.9Z" fill="#08141b"/><path d="M268.2 752.3H271.8L270.0 754.9Z" fill="#08141b"/><path d="M273.4 752.3H277.0L275.2 754.9Z" fill="#08141b"/><path d="M263.0 756.2H266.6L264.8 758.8Z" fill="#08141b"/><path d="M268.2 756.2H271.8L270.0 758.8Z" fill="#08141b"/><path d="M273.4 756.2H277.0L275.2 758.8Z" fill="#08141b"/><ellipse cx="317" cy="750" rx="10" ry="7.5" fill="#dfe6ee" transform="rotate(-12 317 750)"/><circle cx="312" cy="748" r="1.8" fill="#d8402c"/><circle cx="316.5" cy="745.2" r="1.8" fill="#3aa545"/><circle cx="321.5" cy="745.6" r="1.8" fill="#e8b53a"/><circle cx="312.5" cy="753" r="1.9" fill="#2b61c6"/><path d="M329.5 738L321.5 757" stroke="#e0903c" stroke-width="2.2"/><path d="M330.5 736L328.5 741" stroke="#f3d8a8" stroke-width="2.6"/><defs><radialGradient id="ie" cx=".45" cy=".45" r=".6"><stop offset="0" stop-color="#9be6ff"/><stop offset="1" stop-color="#1e9ce2"/></radialGradient></defs><path transform="translate(359.3 737.4)" fill-rule="evenodd" fill="url(#ie)" d="M0 10.5C0 4 4 0 9.8 0C15.5 0 19.3 4.2 19.3 10V12H5.2C5.6 15 7.5 16.6 10.3 16.6C12.3 16.6 13.8 15.8 14.6 14.2H19C17.8 18.2 14.5 20.5 10 20.5C4 20.5 0 16.5 0 10.5ZM5.3 8.2H14C13.7 5.6 12.2 3.9 9.7 3.9C7.3 3.9 5.7 5.6 5.3 8.2Z"/><path d="M360 757.5C354 757 356 748 363 742C369 737 377 735 378.5 738.5" fill="none" stroke="#f2c21c" stroke-width="1.7"/><defs><linearGradient id="np" x1="0" y1="1" x2="1" y2="0"><stop offset="0" stop-color="#2f7f95"/><stop offset=".55" stop-color="#8cc4d3"/><stop offset="1" stop-color="#cfeaf1"/></linearGradient></defs><path d="M414 737L426.5 739L425 757.5L421 758.8L405 753Z" fill="#e3e8eb"/><path d="M414 738L424.5 740L419.5 756L405.5 752.5Z" fill="url(#np)"/><path d="M426.5 739.5L427.8 741L427 756L425.3 757.2Z" fill="#d9a441"/><path transform="translate(456 737)" fill-rule="evenodd" fill="#0c7bd8" d="M0 10C1 4 5 0 10.5 0C17 0 20 5 20 10V12.7H7.2C7.4 16 10.5 17.8 13.5 17.8C15.5 17.8 17.2 17.3 18.7 16.4V20.2C17 21.2 15 21.7 12.8 21.7C6.5 21.7 2.4 18 2.4 12.5C2.4 9.5 4 7 6.3 5.6C3.8 6 1.8 7.6 0 10ZM7.3 8.8H14C14 6.5 12.8 4.8 10.6 4.8C8.6 4.8 7.6 6.8 7.3 8.8Z"/><circle cx="515" cy="747.7" r="11.5" fill="#e8453c"/><path d="M515 747.7L505 742A11.5 11.5 0 0 0 509.5 757.8Z" fill="#2da94f"/><path d="M515 747.7L509.5 757.8A11.5 11.5 0 0 0 524.5 741.2H515Z" fill="#fdbd00"/><path d="M515 747.7L505 742A11.5 11.5 0 0 0 509.4 757.7L515 747.7" fill="#2da94f"/><circle cx="515" cy="747.7" r="5.4" fill="#fff"/><circle cx="515" cy="747.7" r="4.2" fill="#4a8af4"/><rect x="562" y="741" width="13.5" height="13" fill="#1673c4"/><path d="M563.5 743H574V752.5H563.5Z" fill="#fff"/><path d="M563.5 743L568.8 748L574 743" fill="none" stroke="#1673c4" stroke-width="1.3"/><path d="M552 738.5L565.5 736V759.5L552 757Z" fill="#0f64b4"/><ellipse cx="558.8" cy="747.7" rx="3" ry="3.8" fill="none" stroke="#fff" stroke-width="1.7"/><rect x="613" y="739.6" width="10.6" height="16" fill="#2f8054" stroke="#fff" stroke-width="1.2"/><path d="M614 743H623.6M614 746.2H623.6M614 749.4H623.6M614 752.6H623.6M618.8 740V756" stroke="#fff" stroke-width="1"/><path d="M601.6 739L615 736.8V759L601.6 756.7Z" fill="#1d7044"/><path d="M605 743.5L611 752M611 743.5L605 752" stroke="#fff" stroke-width="1.8"/><path d="M1097.5 751.5L1103.2 745.5L1109 751.5" fill="none" stroke="#fff" stroke-width="1.3"/><circle cx="1133.3" cy="753.3" r="1.4" fill="#fff"/><path d="M1128.8 753.3A4.5 4.5 0 0 1 1133.3 748.8" fill="none" stroke="#fff" stroke-opacity="1" stroke-width="1.4"/><path d="M1125.8 753.3A7.5 7.5 0 0 1 1133.3 745.8" fill="none" stroke="#fff" stroke-opacity="0.75" stroke-width="1.4"/><path d="M1122.8 753.3A10.5 10.5 0 0 1 1133.3 742.8" fill="none" stroke="#fff" stroke-opacity="0.55" stroke-width="1.4"/><rect x="1148.5" y="744.5" width="10" height="7.5" fill="none" stroke="#fff" stroke-width="1.1"/><rect x="1150" y="746" width="7" height="4.5" fill="#fff"/><path d="M1145 742V744.5M1147.5 742V744.5M1143.8 744.8H1148.6V747.2A2.4 2.4 0 0 1 1143.8 747.2ZM1146.2 749.5V752.5" fill="none" stroke="#fff" stroke-width="1"/><path d="M1167.5 745.7H1170.3L1174.2 742V754.6L1170.3 751H1167.5Z" fill="none" stroke="#fff" stroke-width="1.1" stroke-linejoin="round"/><path d="M1176.3 745.6A3.5 3.5 0 0 1 1176.3 751" fill="none" stroke="#fff" stroke-width="1"/><path d="M1178.4 743.4A6.4 6.4 0 0 1 1178.4 753.2" fill="none" stroke="#fff" stroke-opacity=".6" stroke-width="1"/><path d="M1180.6 741.4A9.2 9.2 0 0 1 1180.6 755.2" fill="none" stroke="#fff" stroke-opacity=".35" stroke-width="1"/><path d="M1194 751.5A3 3 0 0 1 1194.5 745.6A4.2 4.2 0 0 1 1202 744.8A3.3 3.3 0 0 1 1205.5 748.5V751.5Z" fill="#f2f2f2"/><circle cx="1202.5" cy="751" r="4.2" fill="#2f6fe0" stroke="#08141b" stroke-width=".6"/><path d="M1200.2 750.3A2.4 2.4 0 0 1 1204.6 749.8M1204.8 751.7A2.4 2.4 0 0 1 1200.4 752.2" fill="none" stroke="#fff" stroke-width="1"/><path d="M1325.5 740H1341.3V751.5H1331L1328 754.5V751.5H1325.5Z" fill="#fff"/><path d="M1328 743.2H1339M1328 745.8H1339M1328 748.4H1336" stroke="#08141b" stroke-width="1"/><circle cx="1340.3" cy="755.2" r="7.6" fill="#3a3f42" stroke="#08141b" stroke-width="1"/><text x="1337.4" y="759.3" font-family="Liberation Sans, sans-serif" font-size="11.5" fill="#fff">1</text><path d="M1360.5 728V768" stroke="#3d4a50" stroke-width="1"/></svg>
</body></html>
